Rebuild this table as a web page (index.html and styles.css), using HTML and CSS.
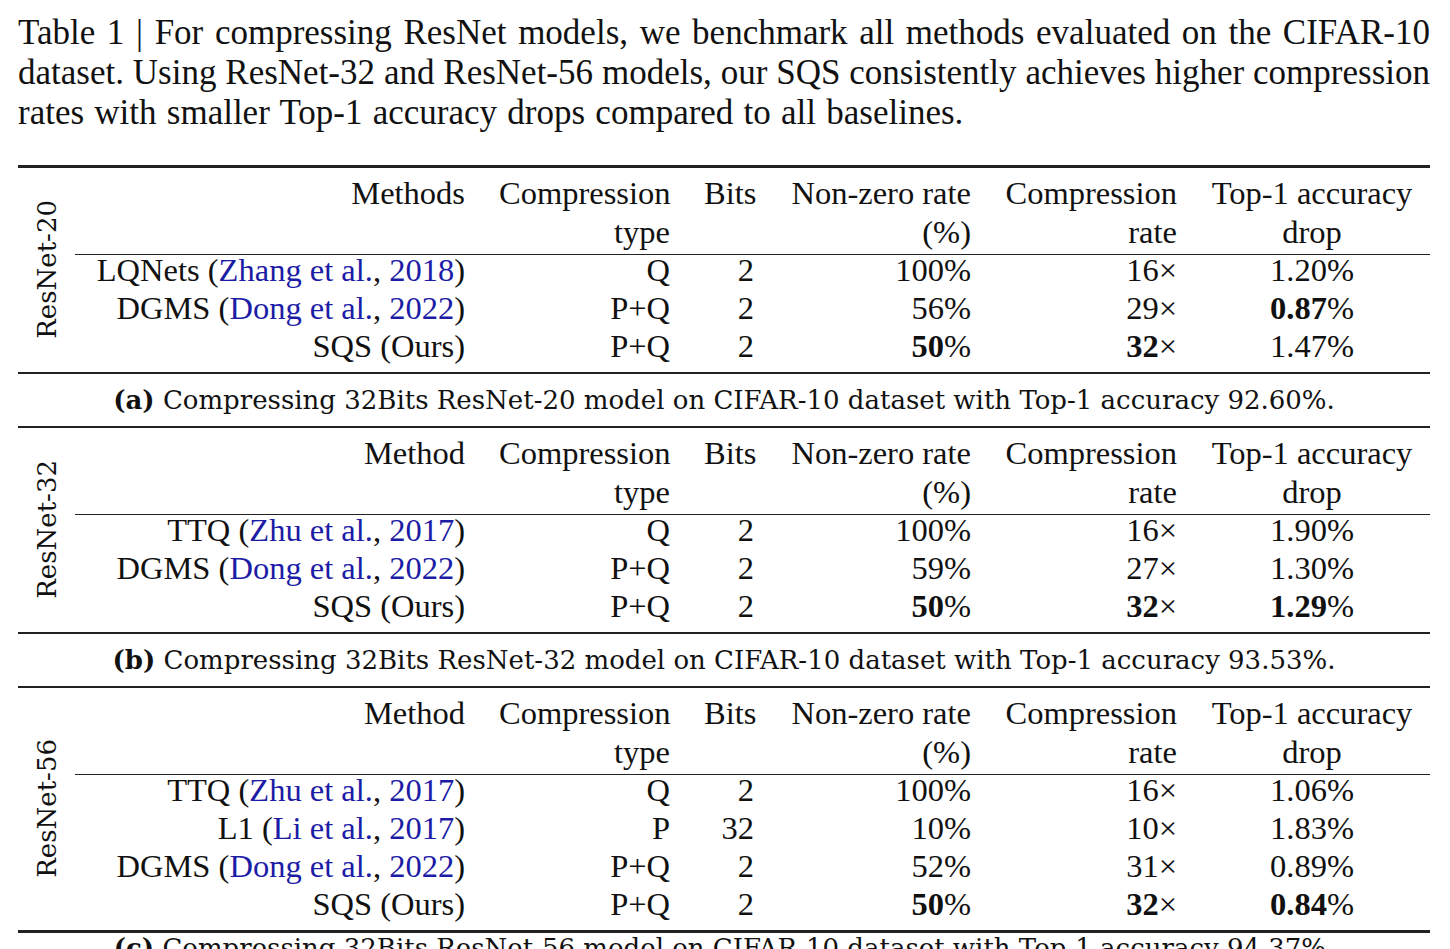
FILE: index.html
```html
<!DOCTYPE html>
<html lang="en">
<head>
    <meta charset="UTF-8">
    <meta name="viewport" content="width=device-width, initial-scale=1.0">
    <title>Table 1 - ResNet compression on CIFAR-10</title>
    <link rel="stylesheet" href="styles.css">
</head>
<body>

    <div class="page">
        <!-- 表格标题 -->
        <p class="caption">
            <span class="line">Table 1 | For compressing ResNet models, we benchmark all methods evaluated on the CIFAR-10</span>
            <span class="line">dataset. Using ResNet-32 and ResNet-56 models, our SQS consistently achieves higher compression</span>
            <span class="line last">rates with smaller Top-1 accuracy drops compared to all baselines.</span>
        </p>

        <!-- (a) ResNet-20 -->
        <div class="subtable first">
            <div class="model"><span>ResNet-20</span></div>
            <table class="results">
                <colgroup>
                    <col class="c-method"><col class="c-type"><col class="c-bits"><col class="c-nz"><col class="c-rate"><col class="c-drop">
                </colgroup>
                <thead>
                    <tr>
                        <th>Methods</th>
                        <th>Compression<br>type</th>
                        <th>Bits<br>&nbsp;</th>
                        <th>Non-zero rate<br>(%)</th>
                        <th>Compression<br>rate</th>
                        <th class="center">Top-1 accuracy<br>drop</th>
                    </tr>
                </thead>
                <tbody>
                    <tr>
                        <td>LQNets (<a class="cite">Zhang et al.</a>, <a class="cite">2018</a>)</td>
                        <td>Q</td><td>2</td><td>100%</td><td>16×</td><td class="center">1.20%</td>
                    </tr>
                    <tr>
                        <td>DGMS (<a class="cite">Dong et al.</a>, <a class="cite">2022</a>)</td>
                        <td>P+Q</td><td>2</td><td>56%</td><td>29×</td><td class="center"><b>0.87</b>%</td>
                    </tr>
                    <tr>
                        <td>SQS (Ours)</td>
                        <td>P+Q</td><td>2</td><td><b>50</b>%</td><td><b>32</b>×</td><td class="center">1.47%</td>
                    </tr>
                </tbody>
            </table>
        </div>
        <p class="subcap"><b>(a)</b> Compressing 32Bits ResNet-20 model on CIFAR-10 dataset with Top-1 accuracy 92.60%.</p>

        <!-- (b) ResNet-32 -->
        <div class="subtable">
            <div class="model"><span>ResNet-32</span></div>
            <table class="results">
                <colgroup>
                    <col class="c-method"><col class="c-type"><col class="c-bits"><col class="c-nz"><col class="c-rate"><col class="c-drop">
                </colgroup>
                <thead>
                    <tr>
                        <th>Method</th>
                        <th>Compression<br>type</th>
                        <th>Bits<br>&nbsp;</th>
                        <th>Non-zero rate<br>(%)</th>
                        <th>Compression<br>rate</th>
                        <th class="center">Top-1 accuracy<br>drop</th>
                    </tr>
                </thead>
                <tbody>
                    <tr>
                        <td>TTQ (<a class="cite">Zhu et al.</a>, <a class="cite">2017</a>)</td>
                        <td>Q</td><td>2</td><td>100%</td><td>16×</td><td class="center">1.90%</td>
                    </tr>
                    <tr>
                        <td>DGMS (<a class="cite">Dong et al.</a>, <a class="cite">2022</a>)</td>
                        <td>P+Q</td><td>2</td><td>59%</td><td>27×</td><td class="center">1.30%</td>
                    </tr>
                    <tr>
                        <td>SQS (Ours)</td>
                        <td>P+Q</td><td>2</td><td><b>50</b>%</td><td><b>32</b>×</td><td class="center"><b>1.29</b>%</td>
                    </tr>
                </tbody>
            </table>
        </div>
        <p class="subcap"><b>(b)</b> Compressing 32Bits ResNet-32 model on CIFAR-10 dataset with Top-1 accuracy 93.53%.</p>

        <!-- (c) ResNet-56 -->
        <div class="subtable last">
            <div class="model"><span>ResNet-56</span></div>
            <table class="results">
                <colgroup>
                    <col class="c-method"><col class="c-type"><col class="c-bits"><col class="c-nz"><col class="c-rate"><col class="c-drop">
                </colgroup>
                <thead>
                    <tr>
                        <th>Method</th>
                        <th>Compression<br>type</th>
                        <th>Bits<br>&nbsp;</th>
                        <th>Non-zero rate<br>(%)</th>
                        <th>Compression<br>rate</th>
                        <th class="center">Top-1 accuracy<br>drop</th>
                    </tr>
                </thead>
                <tbody>
                    <tr>
                        <td>TTQ (<a class="cite">Zhu et al.</a>, <a class="cite">2017</a>)</td>
                        <td>Q</td><td>2</td><td>100%</td><td>16×</td><td class="center">1.06%</td>
                    </tr>
                    <tr>
                        <td>L1 (<a class="cite">Li et al.</a>, <a class="cite">2017</a>)</td>
                        <td>P</td><td>32</td><td>10%</td><td>10×</td><td class="center">1.83%</td>
                    </tr>
                    <tr>
                        <td>DGMS (<a class="cite">Dong et al.</a>, <a class="cite">2022</a>)</td>
                        <td>P+Q</td><td>2</td><td>52%</td><td>31×</td><td class="center">0.89%</td>
                    </tr>
                    <tr>
                        <td>SQS (Ours)</td>
                        <td>P+Q</td><td>2</td><td><b>50</b>%</td><td><b>32</b>×</td><td class="center"><b>0.84</b>%</td>
                    </tr>
                </tbody>
            </table>
        </div>
        <p class="subcap end"><b>(c)</b> Compressing 32Bits ResNet-56 model on CIFAR-10 dataset with Top-1 accuracy 94.37%.</p>
    </div>

</body>
</html>
```

FILE: styles.css
```css
body {
    margin: 0;
    background-color: #fff;
    color: #111;
    font-family: "Liberation Serif", "Times New Roman", serif;
}
.page {
    width: 1412px;
    padding: 13px 20px 0 18px;
}

/* 顶部标题 */
.caption {
    margin: 0 0 32px 0;
    font-size: 35px;
    line-height: 40px;
}
.caption .line {
    display: block;
    white-space: nowrap;
    text-align: justify;
    text-align-last: justify;
}
.caption .line.last {
    text-align-last: left;
    word-spacing: 1.5px;
}

/* 子表格 */
.subtable {
    display: flex;
    border-top: 2px solid #222;
    border-bottom: 2px solid #222;
    padding-bottom: 7px;
}
.subtable.first {
    border-top-width: 3px;
}
.subtable.last {
    border-bottom-width: 3px;
}
.subtable .model {
    width: 57px;
    flex: none;
    display: flex;
    align-items: center;
    justify-content: center;
    padding-top: 6px;
}
.subtable .model span {
    writing-mode: vertical-rl;
    transform: rotate(180deg);
    font-family: "DejaVu Serif", serif;
    font-size: 26px;
    line-height: 30px;
}

.results {
    width: 1355px;
    table-layout: fixed;
    border-collapse: collapse;
    font-size: 32.5px;
}
.results .c-method { width: 407px; }
.results .c-type { width: 205px; }
.results .c-bits { width: 84px; }
.results .c-nz { width: 217px; }
.results .c-rate { width: 206px; }
.results .c-drop { width: 236px; }

.results th {
    font-weight: normal;
    text-align: right;
    vertical-align: top;
    line-height: 39px;
    padding: 6px 17px 2px 17px;
    border-bottom: 1px solid #222;
    white-space: nowrap;
}
.results td {
    text-align: right;
    line-height: 30px;
    padding: 4px 17px;
    white-space: nowrap;
}
.results tbody tr:first-child td {
    padding-top: 0;
}
.results .center {
    text-align: center;
}
.results .cite {
    color: #1c1ca6;
    text-decoration: none;
}

/* 子标题 */
.subcap {
    margin: 0;
    padding: 11px 0;
    text-align: center;
    font-family: "DejaVu Serif", serif;
    font-size: 26px;
    line-height: 30px;
}
.subcap.end {
    padding-top: 0;
}
```
